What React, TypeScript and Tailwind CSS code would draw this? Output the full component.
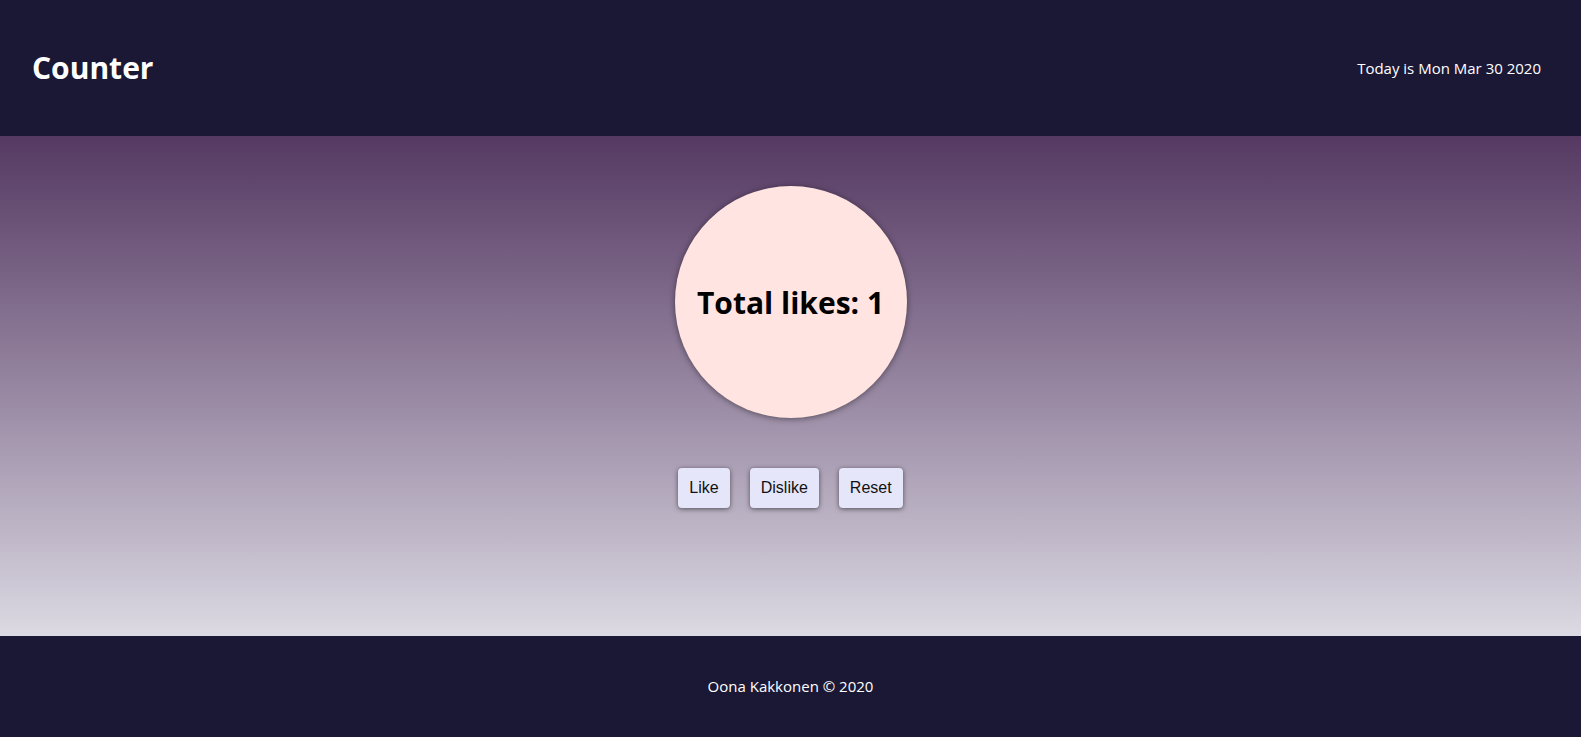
export default function App() {
    const font = { fontFamily: '"Open Sans", "Noto Sans", sans-serif' }

    return (
        <div className="w-full h-screen flex flex-col font-['Open_Sans',sans-serif]">
            <header className="h-[136px] shrink-0 bg-[#1b1836] flex items-center justify-between pl-8 pr-10 text-white">
                <h1 className="text-[30px] font-bold leading-none">Counter</h1>
                <span className="text-[15px]">Today is Mon Mar 30 2020</span>
            </header>
            <main className="flex-1 flex flex-col items-center bg-linear-to-b from-[#553962] to-[#dcdae3] pt-[50px]">
                <div className="w-[232px] h-[232px] rounded-full bg-[#ffe4e1] flex items-center justify-center shadow-[0_1px_6px_rgba(0,0,0,0.45)]">
                    <h2 className="text-[30px] font-bold text-black">Total likes: 1</h2>
                </div>
                <div className="flex gap-5 mt-[50px] font-['Liberation_Sans',Arial,sans-serif]">
                    <button className="h-10 px-[11px] rounded bg-[#e6e6fa] text-[16px] text-[#111] shadow-[0_1px_5px_rgba(0,0,0,0.55)]">Like</button>
                    <button className="h-10 px-[11px] rounded bg-[#e6e6fa] text-[16px] text-[#111] shadow-[0_1px_5px_rgba(0,0,0,0.55)]">Dislike</button>
                    <button className="h-10 px-[11px] rounded bg-[#e6e6fa] text-[16px] text-[#111] shadow-[0_1px_5px_rgba(0,0,0,0.55)]">Reset</button>
                </div>
            </main>
            <footer className="h-[101px] shrink-0 bg-[#1b1836] flex items-center justify-center text-white text-[15px]" style={font}>
                Oona Kakkonen © 2020
            </footer>
        </div>
    )
}
